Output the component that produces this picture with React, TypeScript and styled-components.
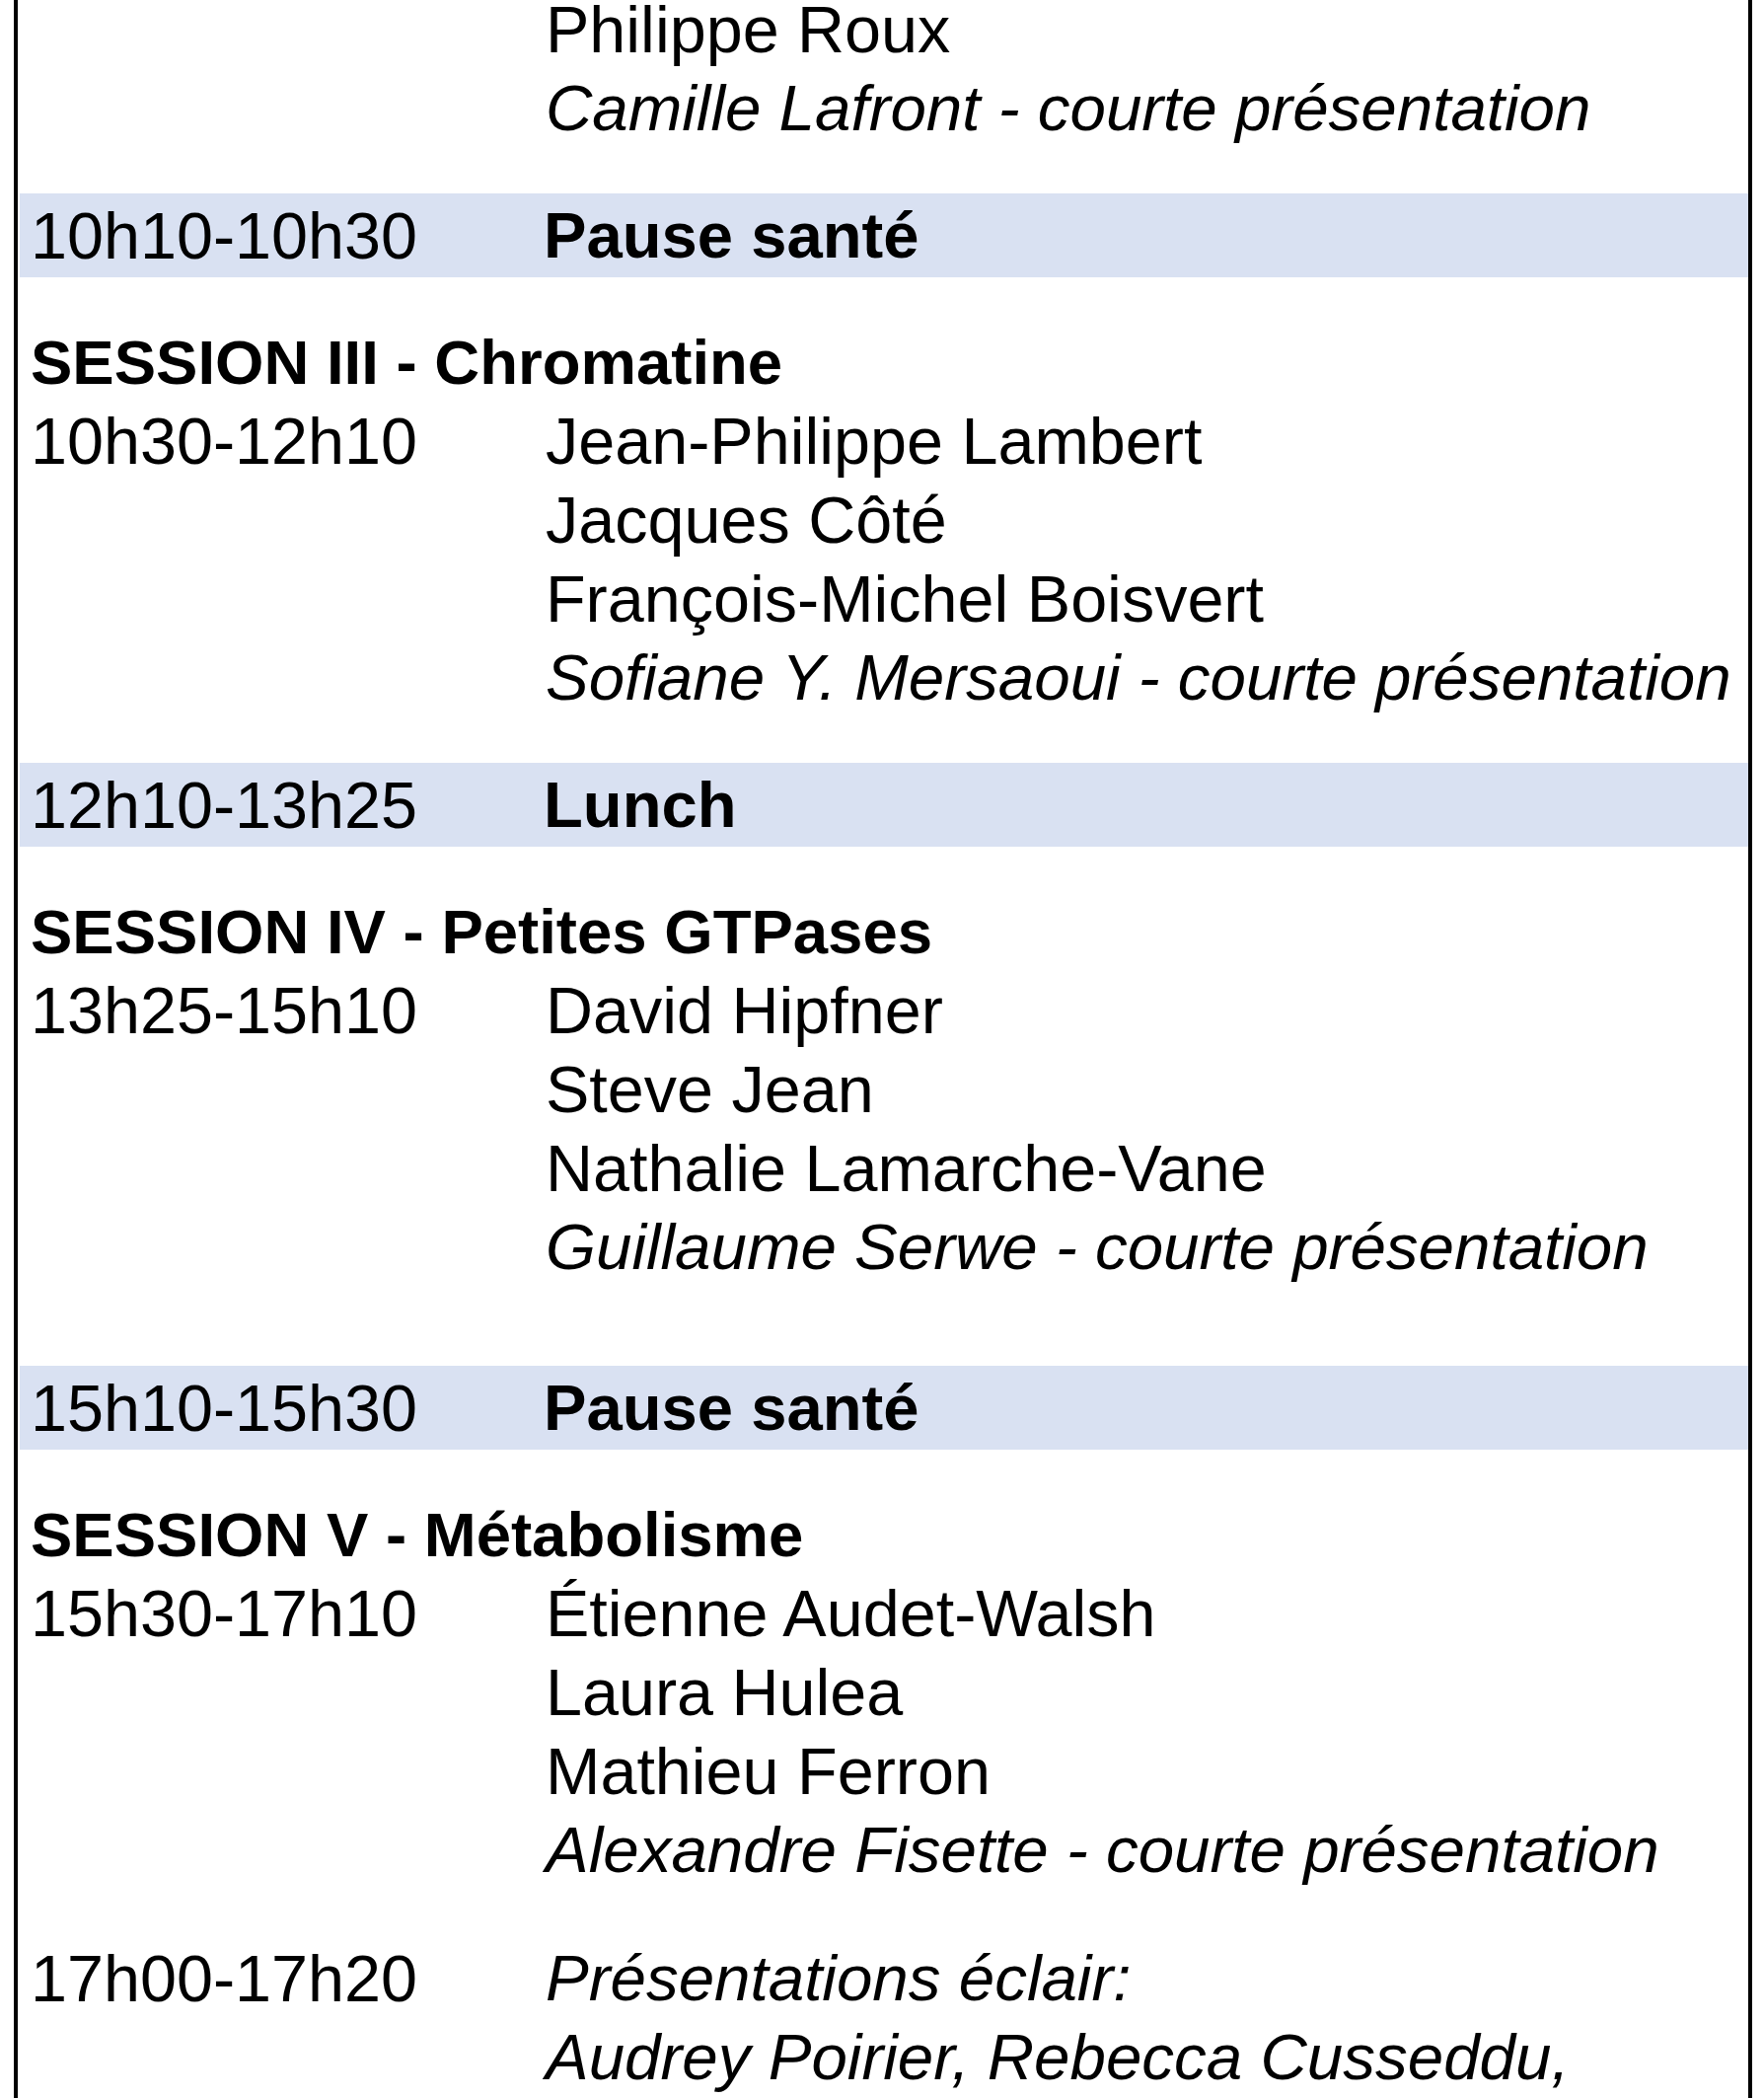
import React, { FC } from 'react'
import styled, { createGlobalStyle } from 'styled-components'

const GlobalStyle = createGlobalStyle`
  html, body {
    margin: 0;
    padding: 0;
    background: #fff;
  }
  body {
    font-family: 'Liberation Sans', Arial, Helvetica, sans-serif;
    color: #000;
    overflow: hidden;
  }
`

interface Talk {
  name: string
  short?: boolean
}

interface Slot {
  time?: string
  talks: Talk[]
}

interface Session {
  title?: string
  slot: Slot
  breakBefore?: { time: string; label: string; extraSpace?: boolean }
}

const program: Session[] = [
  {
    slot: {
      talks: [
        { name: 'Philippe Roux' },
        { name: 'Camille Lafront - courte présentation', short: true },
      ],
    },
  },
  {
    breakBefore: { time: '10h10-10h30', label: 'Pause santé' },
    title: 'SESSION III - Chromatine',
    slot: {
      time: '10h30-12h10',
      talks: [
        { name: 'Jean-Philippe Lambert' },
        { name: 'Jacques Côté' },
        { name: 'François-Michel Boisvert' },
        { name: 'Sofiane Y. Mersaoui - courte présentation', short: true },
      ],
    },
  },
  {
    breakBefore: { time: '12h10-13h25', label: 'Lunch' },
    title: 'SESSION IV - Petites GTPases',
    slot: {
      time: '13h25-15h10',
      talks: [
        { name: 'David Hipfner' },
        { name: 'Steve Jean' },
        { name: 'Nathalie Lamarche-Vane' },
        { name: 'Guillaume Serwe - courte présentation', short: true },
      ],
    },
  },
  {
    breakBefore: { time: '15h10-15h30', label: 'Pause santé', extraSpace: true },
    title: 'SESSION V - Métabolisme',
    slot: {
      time: '15h30-17h10',
      talks: [
        { name: 'Étienne Audet-Walsh' },
        { name: 'Laura Hulea' },
        { name: 'Mathieu Ferron' },
        { name: 'Alexandre Fisette - courte présentation', short: true },
      ],
    },
  },
]

const lightning: Slot = {
  time: '17h00-17h20',
  talks: [
    { name: 'Présentations éclair:', short: true },
    { name: 'Audrey Poirier, Rebecca Cusseddu,', short: true },
  ],
}

export default function App() {
  return (
    <>
      <GlobalStyle />
      <Frame>
        {program.map((session, i) => (
          <React.Fragment key={i}>
            {session.breakBefore && (
              <Band $extraSpace={session.breakBefore.extraSpace}>
                <Time>{session.breakBefore.time}</Time>
                <BandLabel>{session.breakBefore.label}</BandLabel>
              </Band>
            )}
            {session.title && <SessionTitle>{session.title}</SessionTitle>}
            <SlotRow slot={session.slot} first={i === 0} />
          </React.Fragment>
        ))}
        <SlotRow slot={lightning} spaced />
      </Frame>
    </>
  )
}

interface SlotRowProps {
  slot: Slot
  first?: boolean
  spaced?: boolean
}

const SlotRow: FC<SlotRowProps> = ({ slot, first, spaced }) => (
  <Row $first={first} $spaced={spaced}>
    <Time>{slot.time}</Time>
    <Names>
      {slot.talks.map(talk => (
        <Name key={talk.name} $short={talk.short}>
          {talk.name}
        </Name>
      ))}
    </Names>
  </Row>
)

const Frame = styled.div`
  box-sizing: border-box;
  margin-left: 14px;
  width: 1762px;
  height: 2126px;
  border-left: 4.5px solid #000;
  border-right: 4.5px solid #000;
  overflow: hidden;
  display: flex;
  flex-direction: column;
`

const Row = styled.div<{ $first?: boolean; $spaced?: boolean }>`
  display: grid;
  grid-template-columns: 522px 1fr;
  padding-left: 13px;
  margin-top: ${p => (p.$first ? '-10px' : p.$spaced ? '50px' : '0')};
`

const Time = styled.div`
  font-size: 66.5px;
  line-height: 80px;
  white-space: nowrap;
`

const Names = styled.div`
  display: flex;
  flex-direction: column;
`

const Name = styled.div<{ $short?: boolean }>`
  font-size: ${p => (p.$short ? '65.5px' : '66.5px')};
  line-height: 80px;
  white-space: nowrap;
  font-style: ${p => (p.$short ? 'italic' : 'normal')};
`

const Band = styled.div<{ $extraSpace?: boolean }>`
  display: grid;
  grid-template-columns: 520px 1fr;
  align-items: center;
  height: 85px;
  margin: ${p => (p.$extraSpace ? '80px' : '46px')} 0 46px 2px;
  padding-left: 11px;
  background: #d9e1f2;
`

const BandLabel = styled.div`
  font-size: 65.2px;
  font-weight: 700;
  line-height: 80px;
  white-space: nowrap;
`

const SessionTitle = styled.div`
  padding-left: 13px;
  font-size: 63.5px;
  font-weight: 700;
  line-height: 80px;
  white-space: nowrap;
`
